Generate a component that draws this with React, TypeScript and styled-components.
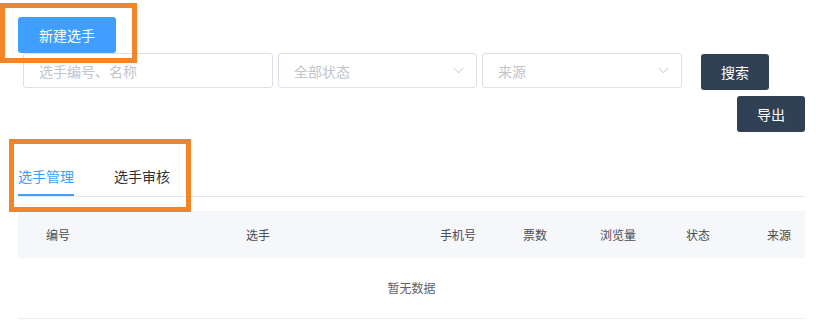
import React from 'react';
import styled, { createGlobalStyle } from 'styled-components';

const colors = {
  primary: '#409eff',
  dark: '#304156',
  border: '#dcdfe6',
  placeholder: '#c0c4cc',
  line: '#e4e7ed',
  headBg: '#f5f7fa',
  text: '#303133',
  headText: '#4a4d52',
  empty: '#606266',
  mark: '#f38428',
};

const GlobalStyle = createGlobalStyle`
  html, body {
    margin: 0;
    padding: 0;
    background: #fff;
  }
  body {
    font-family: "Noto Sans CJK SC", "Noto Sans", sans-serif;
    font-size: 14px;
    color: ${colors.text};
  }
`;

const Page = styled.div`
  position: relative;
  width: 816px;
  height: 326px;
  padding: 17px 11px 0 18px;
  box-sizing: border-box;
  overflow: hidden;
`;

const Button = styled.button<{ $variant: 'primary' | 'dark' }>`
  height: 36px;
  padding: 0;
  border: none;
  border-radius: 3px;
  background: ${(p) => (p.$variant === 'primary' ? colors.primary : colors.dark)};
  color: #fff;
  font-family: inherit;
  font-size: 14px;
  line-height: 36px;
  cursor: pointer;
`;

const NewButton = styled(Button)`
  width: 98px;
  display: block;
`;

const FilterRow = styled.div`
  display: flex;
  align-items: flex-start;
  margin-left: 5px;
`;

const Field = styled.div<{ $width: number }>`
  width: ${(p) => p.$width}px;
  height: 35px;
  border: 1px solid ${colors.border};
  border-radius: 3px;
  box-sizing: border-box;
  display: flex;
  align-items: center;
  justify-content: space-between;
  padding: 0 12px 0 15px;
  margin-right: 5px;
  color: ${colors.placeholder};
  font-size: 14px;
  line-height: 1;
`;

const SearchButton = styled(Button)`
  width: 68px;
  margin-left: 14px;
  margin-top: 1px;
`;

const ExportRow = styled.div`
  display: flex;
  justify-content: flex-end;
  margin-top: 6px;
`;

const ExportButton = styled(Button)`
  width: 68px;
`;

const Tabs = styled.div`
  display: flex;
  margin-top: 25px;
  border-bottom: 1px solid ${colors.line};
`;

const Tab = styled.div<{ $active?: boolean }>`
  position: relative;
  height: 39px;
  line-height: 38px;
  padding: 0 20px;
  font-size: 14px;
  color: ${(p) => (p.$active ? colors.primary : colors.text)};
  &:first-child {
    padding-left: 0;
  }
  &::after {
    content: '';
    display: ${(p) => (p.$active ? 'block' : 'none')};
    position: absolute;
    left: 0;
    right: 20px;
    bottom: 0;
    height: 2px;
    background: ${colors.primary};
  }
`;

const Table = styled.div`
  margin-top: 14px;
  border-bottom: 1px solid #ebeef5;
`;

const HeadRow = styled.div`
  display: grid;
  grid-template-columns: 80px 320px 80px 74px 92px 68px 1fr;
  height: 47px;
  align-items: center;
  background: ${colors.headBg};
`;

const HeadCell = styled.div<{ $align?: 'center' | 'right' }>`
  font-size: 12px;
  font-weight: 400;
  color: ${colors.headText};
  text-align: ${(p) => p.$align ?? 'center'};
  padding-right: ${(p) => (p.$align === 'right' ? '14px' : '0')};
`;

const EmptyRow = styled.div`
  height: 60px;
  line-height: 60px;
  text-align: center;
  font-size: 12px;
  color: ${colors.empty};
`;

const Mark = styled.div<{ $left: number; $top: number; $w: number; $h: number }>`
  position: absolute;
  left: ${(p) => p.$left}px;
  top: ${(p) => p.$top}px;
  width: ${(p) => p.$w}px;
  height: ${(p) => p.$h}px;
  border: 5px solid ${colors.mark};
  box-sizing: border-box;
  pointer-events: none;
`;

const Chevron = () => (
  <svg width="11" height="7" viewBox="0 0 11 7" fill="none">
    <path d="M0.5 0.8 L5.5 5.8 L10.5 0.8" stroke={colors.placeholder} strokeWidth="1" />
  </svg>
);

const columns = ['编号', '选手', '手机号', '票数', '浏览量', '状态', '来源'];

const App = () => {
  return (
    <Page>
      <GlobalStyle />
      <NewButton $variant="primary">新建选手</NewButton>

      <FilterRow>
        <Field $width={250}>选手编号、名称</Field>
        <Field $width={199}>
          全部状态
          <Chevron />
        </Field>
        <Field $width={200}>
          来源
          <Chevron />
        </Field>
        <SearchButton $variant="dark">搜索</SearchButton>
      </FilterRow>

      <ExportRow>
        <ExportButton $variant="dark">导出</ExportButton>
      </ExportRow>

      <Tabs>
        <Tab $active>选手管理</Tab>
        <Tab>选手审核</Tab>
      </Tabs>

      <Table>
        <HeadRow>
          {columns.map((c, i) => (
            <HeadCell key={c} $align={i === columns.length - 1 ? 'right' : 'center'}>
              {c}
            </HeadCell>
          ))}
        </HeadRow>
        <EmptyRow>暂无数据</EmptyRow>
      </Table>

      <Mark $left={0} $top={3} $w={137} $h={60} />
      <Mark $left={9} $top={139} $w={182} $h={73} />
    </Page>
  );
};

export default App;
